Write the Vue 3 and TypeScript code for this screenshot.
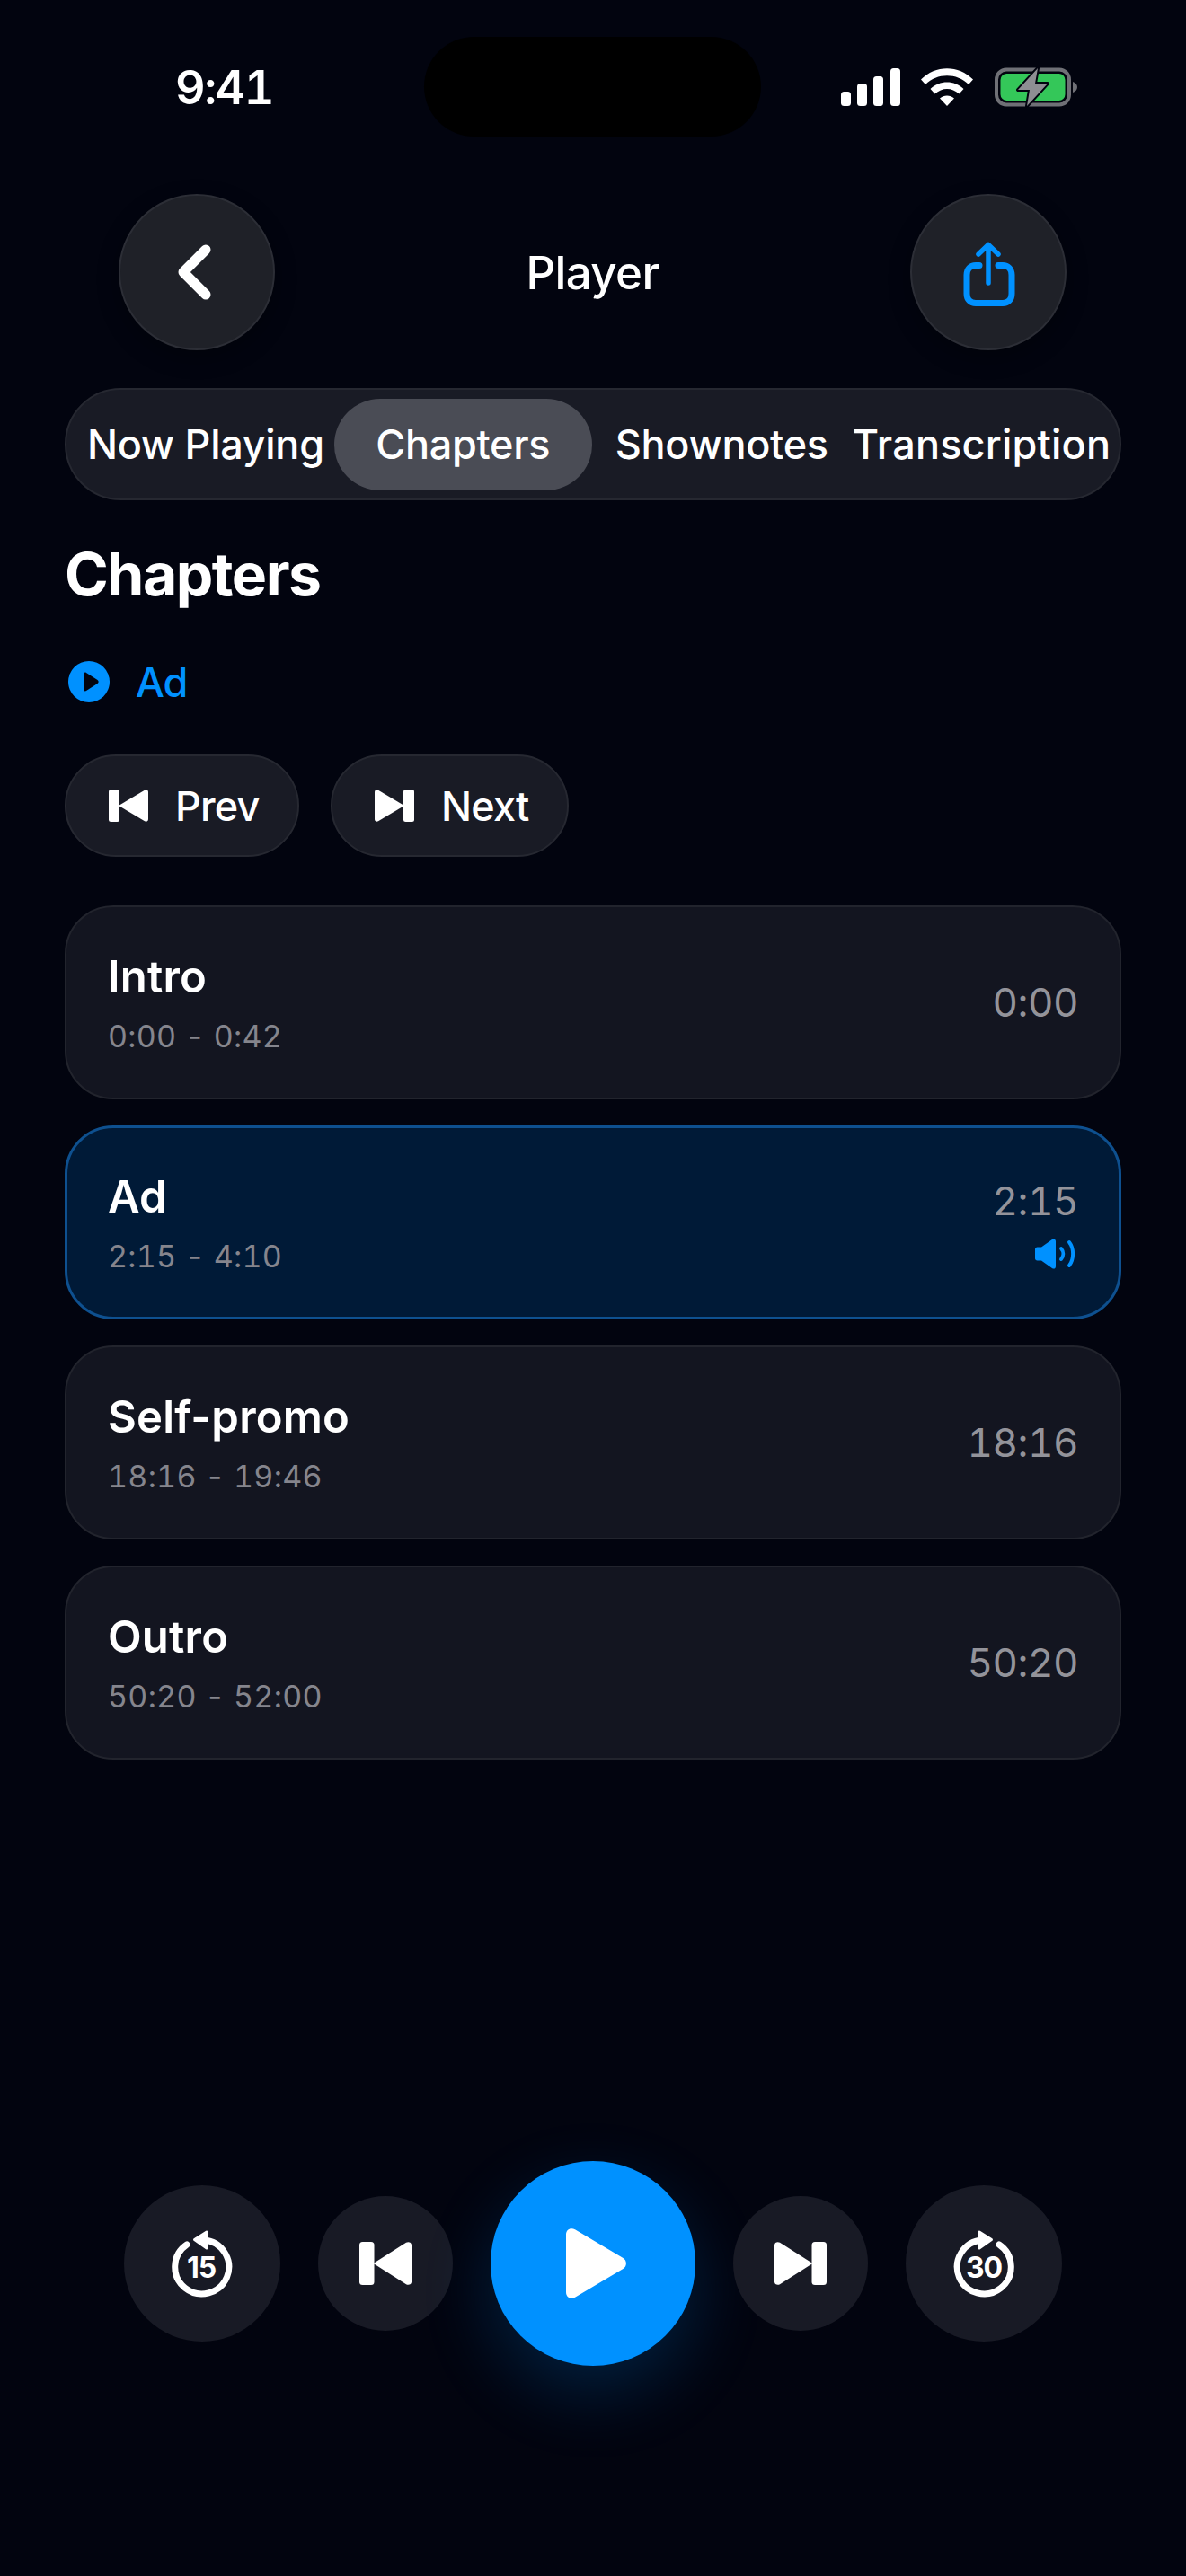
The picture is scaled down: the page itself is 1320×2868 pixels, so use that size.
<script setup lang="ts">
interface Chapter {
  title: string
  range: string
  time: string
  active?: boolean
}

const tabs: string[] = ['Now Playing', 'Chapters', 'Shownotes', 'Transcription']
const activeTab = 'Chapters'

const chapters: Chapter[] = [
  { title: 'Intro', range: '0:00 - 0:42', time: '0:00' },
  { title: 'Ad', range: '2:15 - 4:10', time: '2:15', active: true },
  { title: 'Self-promo', range: '18:16 - 19:46', time: '18:16' },
  { title: 'Outro', range: '50:20 - 52:00', time: '50:20' }
]
</script>

<template>
  <div class="screen">
    <div class="status">
      <span class="clock">9:41</span>
      <div class="island"></div>
      <div class="status-icons">
        <svg class="sig" width="66" height="42" viewBox="0 0 66 42" fill="#fff">
          <rect x="0" y="26" width="11" height="16" rx="3.5" />
          <rect x="18" y="17" width="11" height="25" rx="3.5" />
          <rect x="36" y="9" width="11" height="33" rx="3.5" />
          <rect x="55" y="0" width="11" height="42" rx="3.5" />
        </svg>
        <svg class="wifi" width="58" height="42" viewBox="0 0 58 42" fill="#fff">
          <path d="M0 12.5C16-4 42-4 58 12.5L53 18C40 5 18 5 5 18Z" />
          <path d="M10.500 23C20.500 13 37.500 13 47.500 23L42.500 28.500C34.500 21 23.500 21 15.500 28.500Z" />
          <path d="M21 33.500C25.500 29.500 32.500 29.500 37 33.500L29 42Z" />
        </svg>
        <svg class="batt" width="92" height="44" viewBox="0 0 92 44">
          <rect x="2" y="2.500" width="81" height="39" rx="11" fill="none" stroke="#6f7076" stroke-width="4" />
          <rect x="6.500" y="7" width="72" height="30" rx="7" fill="#34c759" />
          <path d="M87 16C90 17 92 19 92 22C92 25 90 27 87 28Z" fill="#6f7076" />
          <path d="M48 1L26 25H39L36 43L59 18H45Z" fill="#8e8e93" stroke="#02040f" stroke-width="4" stroke-linejoin="round" paint-order="stroke" />
        </svg>
      </div>
    </div>

    <header class="nav">
      <button class="round">
        <svg width="46" height="70" viewBox="0 0 46 70" fill="none" stroke="#fff" stroke-width="11" stroke-linecap="round" stroke-linejoin="round">
          <path d="M33 10L8 35L33 60" />
        </svg>
      </button>
      <h2 class="nav-title">Player</h2>
      <button class="round">
        <svg width="60" height="76" viewBox="0 0 60 76" fill="none" stroke="#0091ff" stroke-linecap="round" stroke-linejoin="round">
          <path d="M30 9V50M19 18L30 7.500L41 18" stroke-width="5.500" />
          <path d="M20 30.500H16C10 30.500 6 34.500 6 41V62C6 68.500 10 72.500 16 72.500H46C52 72.500 56 68.500 56 62V41C56 34.500 52 30.500 46 30.500H41" stroke-width="7" />
        </svg>
      </button>
    </header>

    <nav class="tabs">
      <span v-for="t in tabs" :key="t" class="tab" :class="{ on: t === activeTab }">{{ t }}</span>
    </nav>

    <main class="content">
      <h1 class="heading">Chapters</h1>
      <div class="current">
        <svg width="46" height="46" viewBox="0 0 46 46">
          <circle cx="23" cy="23" r="23" fill="#0091ff" />
          <path d="M17 14.500C17 13 18.500 12 20 12.900L32.500 21C34 22 34 24 32.500 25L20 33.100C18.500 34 17 33 17 31.500Z" fill="#02040f" />
        </svg>
        <span>Ad</span>
      </div>
      <div class="step-row">
        <button class="step step-prev">
          <svg width="44" height="36" viewBox="0 0 44 36" fill="#fff">
            <rect x="0" y="0" width="12" height="36" rx="2.500" />
            <path d="M11 18L40 .7C42 -.4 44 .7 44 3V33C44 35.300 42 36.400 40 35.300Z" />
          </svg>
          <span>Prev</span>
        </button>
        <button class="step step-next">
          <svg width="44" height="36" viewBox="0 0 44 36" fill="#fff">
            <path d="M33 18L4 .7C2 -.4 0 .7 0 3V33C0 35.300 2 36.400 4 35.300Z" />
            <rect x="32" y="0" width="12" height="36" rx="2.500" />
          </svg>
          <span>Next</span>
        </button>
      </div>

      <ul class="list">
        <li v-for="c in chapters" :key="c.title" class="card" :class="{ active: c.active }">
          <div class="card-text">
            <div class="card-title">{{ c.title }}</div>
            <div class="card-range">{{ c.range }}</div>
          </div>
          <div class="card-side">
            <div class="card-time">{{ c.time }}</div>
            <svg v-if="c.active" class="speaker" width="45" height="34" viewBox="0 0 45 34">
              <path d="M0 12C0 10.500 1 9.500 2.500 9.500H7L19 1C21 -.3 23 .7 23 3V31C23 33.300 21 34.300 19 33L7 24.500H2.500C1 24.500 0 23.500 0 22Z" fill="#0091ff" />
              <path d="M29 11C32 14.500 32 19.500 29 23M38 4C43.500 11 43.500 23 38 30" fill="none" stroke="#0091ff" stroke-width="4" stroke-linecap="round" />
            </svg>
          </div>
        </li>
      </ul>
    </main>

    <footer class="controls">
      <button class="ctrl big">
        <svg width="72" height="76" viewBox="0 0 72 76">
          <path d="M19 17A30 30 0 1 0 38 12" fill="none" stroke="#fff" stroke-width="7" stroke-linecap="round" />
          <path d="M27.500 11.500L41 3V21Z" fill="#fff" stroke="#fff" stroke-width="3" stroke-linejoin="round" />
          <text x="35" y="54" text-anchor="middle" class="skip-num">15</text>
        </svg>
      </button>
      <button class="ctrl mid">
        <svg width="58" height="48" viewBox="0 0 58 48" fill="#fff">
          <rect x="0" y="0" width="16.500" height="48" rx="3.500" />
          <path d="M15.500 24L52 .8C54.500 -.6 58 .5 58 3.500V44.500C58 47.500 54.500 48.600 52 47.200Z" />
        </svg>
      </button>
      <button class="ctrl play">
        <svg width="68" height="78" viewBox="0 0 68 78" fill="#fff">
          <path d="M0 7C0 1.500 5 -1.500 10 1.300L63.500 33C68 35.500 68 42.500 63.500 45L10 76.700C5 79.500 0 76.500 0 71Z" />
        </svg>
      </button>
      <button class="ctrl mid">
        <svg width="58" height="48" viewBox="0 0 58 48" fill="#fff">
          <path d="M42.500 24L6 .8C3.500 -.6 0 .5 0 3.500V44.500C0 47.500 3.500 48.600 6 47.200Z" />
          <rect x="41.500" y="0" width="16.500" height="48" rx="3.500" />
        </svg>
      </button>
      <button class="ctrl big">
        <svg width="72" height="76" viewBox="0 0 72 76">
          <path d="M53 17A30 30 0 1 1 34 12" fill="none" stroke="#fff" stroke-width="7" stroke-linecap="round" />
          <path d="M44.500 11.500L31 3V21Z" fill="#fff" stroke="#fff" stroke-width="3" stroke-linejoin="round" />
          <text x="36" y="54" text-anchor="middle" class="skip-num">30</text>
        </svg>
      </button>
    </footer>
  </div>
</template>

<style>
html,
body {
  margin: 0;
  background: #02040f;
}
</style>

<style scoped>
* {
  box-sizing: border-box;
}
.screen {
  position: relative;
  width: 1320px;
  height: 2868px;
  overflow: hidden;
  background: #02040f;
  color: #fff;
  font-family: Inter, 'Liberation Sans', sans-serif;
  padding-top: 41px;
  display: flex;
  flex-direction: column;
}
button {
  font: inherit;
  color: inherit;
  border: 0;
  padding: 0;
  background: none;
}
.status {
  position: relative;
  height: 111px;
  display: flex;
  align-items: center;
  justify-content: space-between;
  padding: 0 121px 0 195px;
}
.clock {
  font-size: 52px;
  font-weight: 600;
  letter-spacing: -1.500px;
  line-height: 1;
  margin-top: 2px;
  font-variant-numeric: tabular-nums;
}
.island {
  position: absolute;
  left: 472px;
  top: 0;
  width: 375px;
  height: 111px;
  border-radius: 56px;
  background: #000;
}
.status-icons {
  display: flex;
  align-items: center;
  gap: 23px;
}
.batt {
  margin-left: 1px;
}
.nav {
  margin-top: 64px;
  padding: 0 133px 0 132px;
  display: flex;
  align-items: center;
  justify-content: space-between;
}
.round {
  width: 174px;
  height: 174px;
  border-radius: 50%;
  background: #1f2128;
  border: 2px solid #2c2e36;
  display: flex;
  align-items: center;
  justify-content: center;
  box-shadow: 0 8px 24px rgba(0, 0, 0, 0.3);
}
.nav-title {
  margin: 0;
  font-size: 51px;
  font-weight: 500;
  letter-spacing: -0.600px;
}
.tabs {
  margin: 42px 72px 0;
  height: 125px;
  border-radius: 63px;
  background: #191b25;
  border: 2px solid #262831;
  display: flex;
  align-items: center;
  gap: 11px;
  padding: 0 0 0 23px;
}
.tab {
  font-size: 45px;
  font-weight: 500;
  letter-spacing: -0.300px;
  white-space: nowrap;
  line-height: 102px;
  height: 102px;
}
.tab.on {
  width: 287px;
  text-align: center;
  border-radius: 51px;
  background: #4a4c55;
  margin-right: 15px;
}
.tab:last-child {
  margin-left: 16px;
  letter-spacing: 0.200px;
}
.content {
  padding: 0 72px;
}
.heading {
  margin: 42px 0 0;
  font-size: 66px;
  font-weight: 700;
  line-height: 80px;
  letter-spacing: -1.500px;
}
.current {
  margin: 57px 0 0 4px;
  height: 46px;
  display: flex;
  align-items: center;
  gap: 29px;
  color: #0091ff;
  font-size: 45px;
  font-weight: 500;
  letter-spacing: -1px;
}
.step-row {
  margin-top: 58px;
  display: flex;
  gap: 35px;
}
.step {
  height: 114px;
  border-radius: 57px;
  background: #191b25;
  border: 2px solid #262831;
  display: flex;
  align-items: center;
  font-size: 45px;
  font-weight: 500;
  letter-spacing: -0.800px;
}
.step-prev {
  width: 261px;
  padding-left: 47px;
  gap: 30px;
}
.step-next {
  width: 265px;
  padding-left: 47px;
  gap: 30px;
}
.list {
  list-style: none;
  margin: 54px 0 0;
  padding: 0;
  display: flex;
  flex-direction: column;
  gap: 29px;
}
.card {
  height: 216px;
  border-radius: 54px;
  background: #131520;
  border: 2px solid #22242d;
  display: flex;
  align-items: center;
  justify-content: space-between;
  padding: 0 46px 0 46px;
}
.card.active {
  background: #001a37;
  border: 3px solid #0e508f;
  padding: 0 45px 0 45px;
}
.card-text {
  padding-top: 2px;
}
.card-title {
  font-size: 49px;
  font-weight: 600;
  letter-spacing: 0.200px;
  line-height: 60px;
}
.card-range {
  margin-top: 14px;
  font-size: 34px;
  line-height: 44px;
  color: #85858d;
  letter-spacing: 0.300px;
  font-variant-numeric: tabular-nums;
}
.card-side {
  display: flex;
  flex-direction: column;
  align-items: flex-end;
}
.card-time {
  font-size: 44px;
  line-height: 54px;
  color: #93939a;
  letter-spacing: -0.500px;
  font-variant-numeric: tabular-nums;
}
.speaker {
  margin-top: 15px;
  margin-right: 3px;
}
.controls {
  margin-top: auto;
  margin-bottom: 234px;
  height: 228px;
  display: flex;
  align-items: center;
  justify-content: center;
  gap: 42px;
}
.ctrl {
  display: flex;
  align-items: center;
  justify-content: center;
  border-radius: 50%;
  background: #181a25;
}
.big {
  width: 174px;
  height: 174px;
}
.mid {
  width: 150px;
  height: 150px;
}
.play {
  width: 228px;
  height: 228px;
  background: #0091ff;
  box-shadow: 0 30px 80px rgba(0, 145, 255, 0.2);
}
.play svg {
  margin-left: 8px;
}
.skip-num {
  font-size: 32px;
  font-weight: 700;
  fill: #fff;
  letter-spacing: -1px;
}
</style>
